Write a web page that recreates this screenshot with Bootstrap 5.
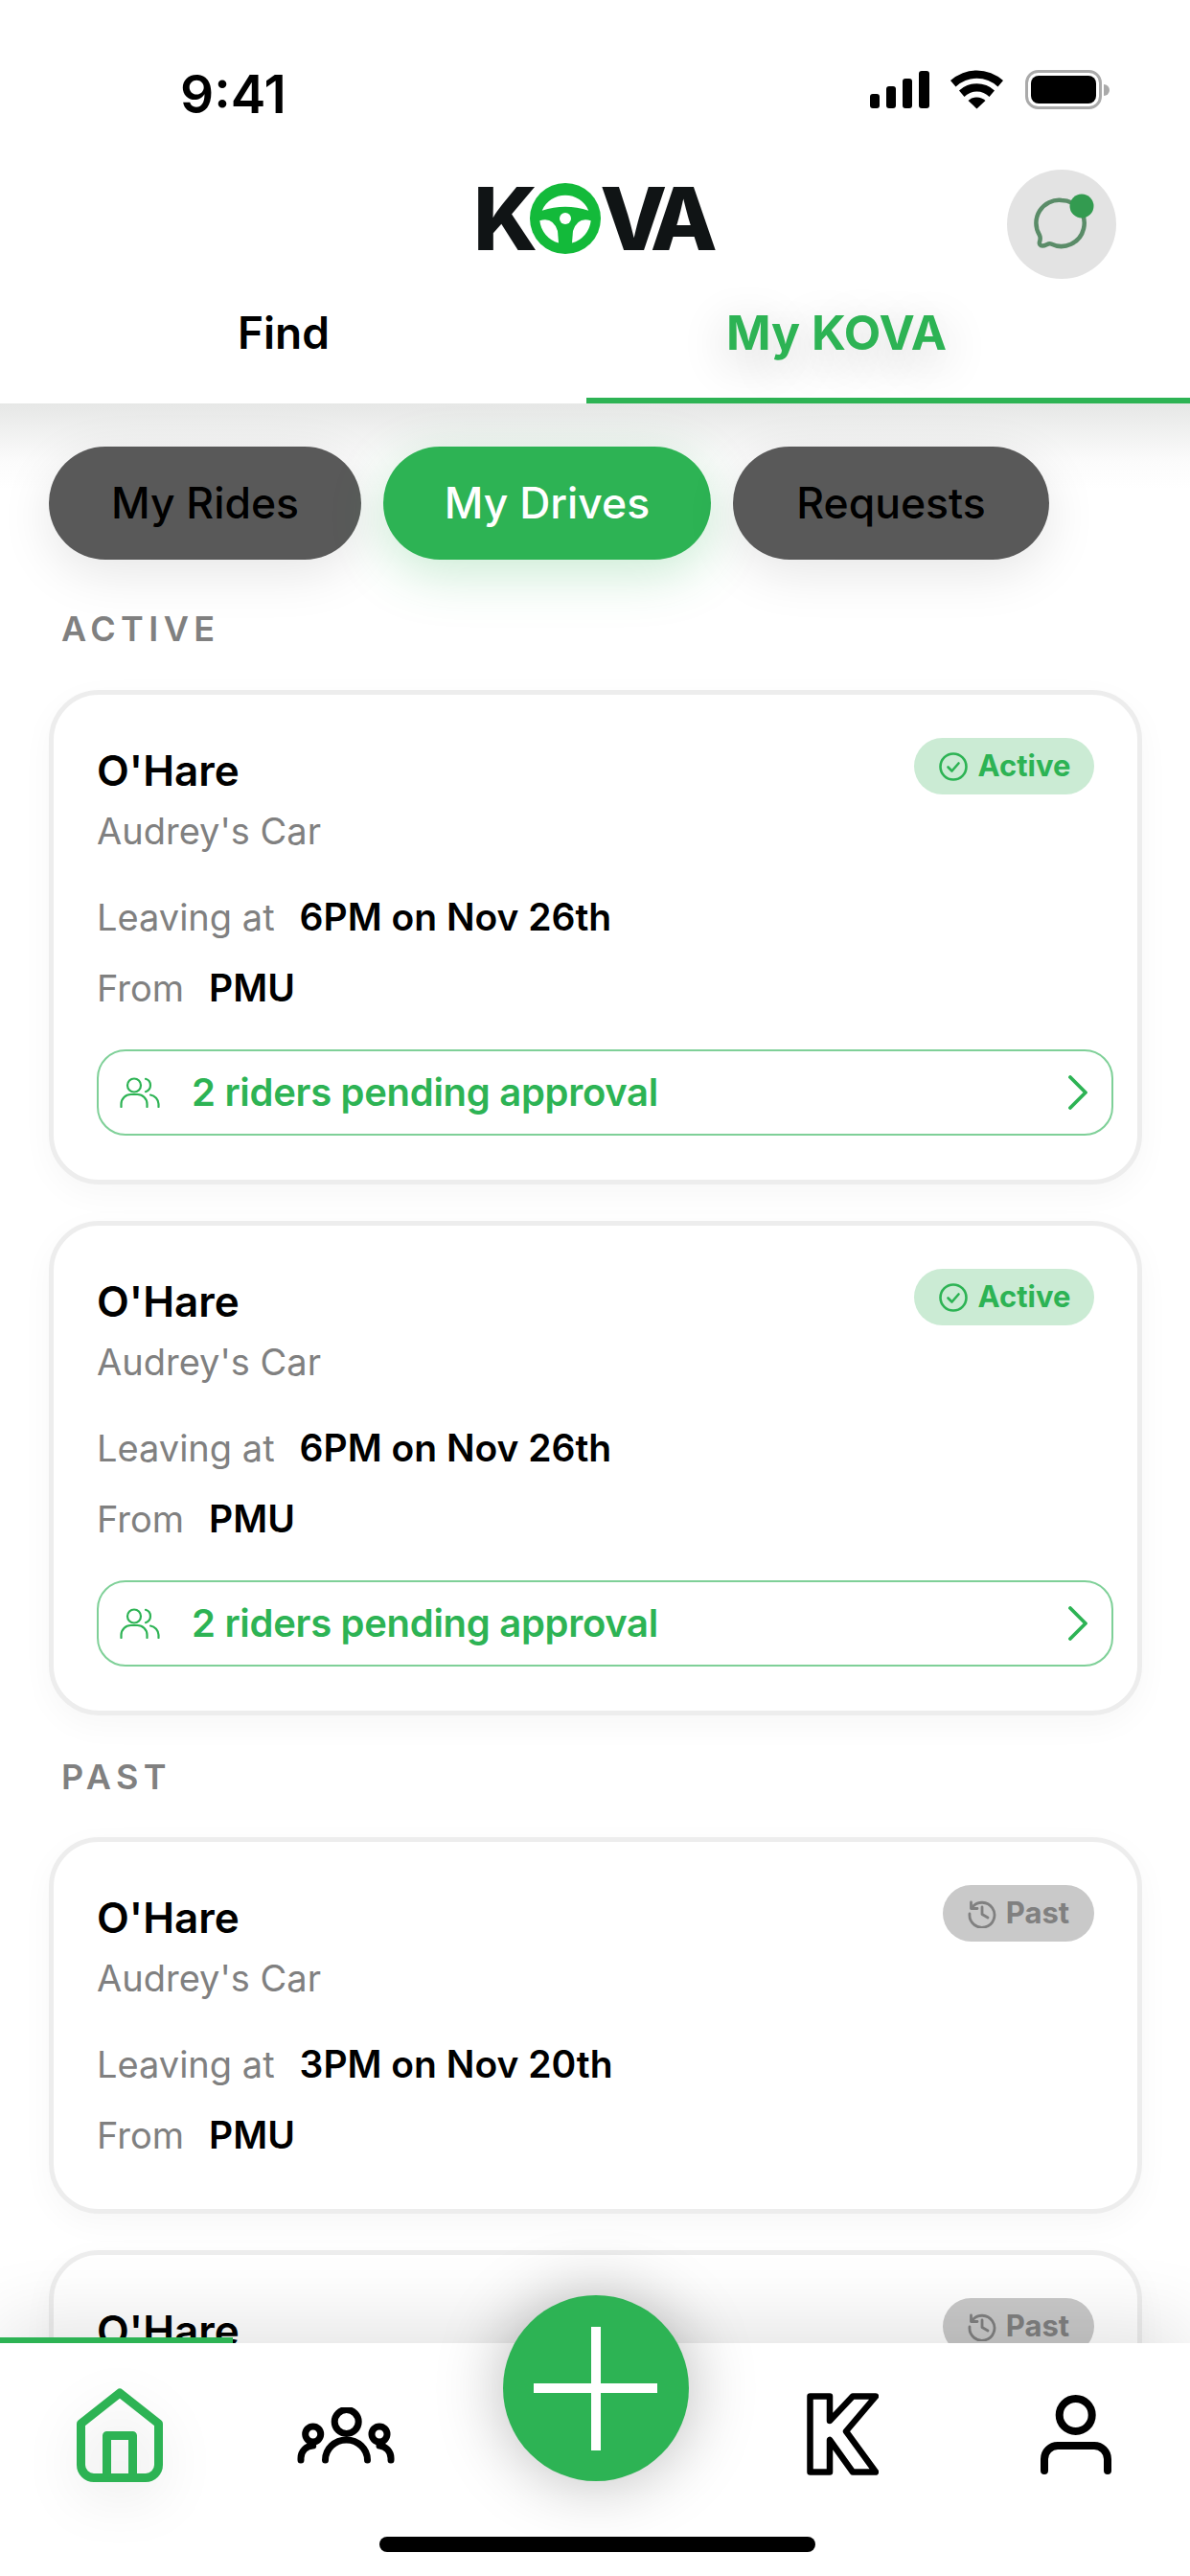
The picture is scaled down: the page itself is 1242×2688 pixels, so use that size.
<!DOCTYPE html>
<html lang="en">
<head>
  <meta charset="UTF-8">
  <meta name="viewport" content="width=device-width, initial-scale=1.0">
  <title>KOVA - My Drives</title>
  <link href="https://cdn.jsdelivr.net/npm/bootstrap@5.3.0/dist/css/bootstrap.min.css" rel="stylesheet">
  <style>
    html, body { height: 100%; }
    body { font-family: Inter, "Liberation Sans", sans-serif; background: #fff; color: #000; }
    .app-screen { width: 1242px; height: 2688px; overflow: hidden; }

    /* header */
    .top-head { height: 421px; background: #fff; flex: none; z-index: 2; }
    .status-row { height: 177px; padding: 73px 84px 0 188px; }
    .status-time { font-size: 55px; font-weight: 600; line-height: 50px; width: 118px; }
    .logo-row { height: 114px; }
    .logo-box { left: 494px; top: -6px; }
    .logo-word { font-size: 91px; font-weight: 800; color: #101415; line-height: 114px; letter-spacing: -5px; }
    .logo-va { letter-spacing: -10px; margin-left: -1px; }
    .logo-wheel { width: 74px; height: 74px; margin: 0 0 0 -3px; }
    .chat-btn { width: 114px; height: 114px; right: 77px; top: 0; background: #e3e3e3; border: 0; padding: 0; }
    .main-tabs { height: 130px; border: 0; }
    .main-tabs .nav-link { border: 0; border-radius: 0; height: 130px; padding: 0 20px 18px 0; font-size: 46px; font-weight: 600; color: #000; background: none; margin: 0; }
    .main-tabs .tab-find { width: 612px; }
    .main-tabs .nav-link.tab-mine { width: 630px; padding: 0 108px 12px 0; color: #2db354; font-size: 50px; font-weight: 700; border-bottom: 6px solid #2db354; text-shadow: 0 12px 50px rgba(0,0,0,.24); }

    /* content */
    .scroll-area { min-height: 0; background: linear-gradient(#e6e7e6, #fbfbfb 60px, #fff 90px); padding: 45px 50px 0 51px; }
    .pill-row { gap: 23px; }
    .pill-btn { height: 118px; border: 0; border-radius: 59px; font-size: 44.5px; font-weight: 500; padding: 0; background: #595959; color: #000; box-shadow: 0 14px 54px rgba(0,0,0,.1); }
    .pill-btn:hover { background: #595959; color: #000; }
    .pill-rides { width: 326px; }
    .pill-drives { width: 342px; background: #2db354; color: #fff; box-shadow: 0 14px 54px rgba(45,179,84,.26); }
    .pill-drives:hover { background: #2db354; color: #fff; }
    .pill-requests { width: 330px; }
    .group-label { font-size: 36px; font-weight: 600; color: #808080; letter-spacing: .15em; line-height: 40px; padding-left: 13px; margin: 52px 0 44px; }
    .group-label.past-label { margin: 44px 0 43px; }
    .drive-card { width: 1141px; border: 5px solid #ededed; border-radius: 52px; padding: 55px 25px 46px 45px; margin-bottom: 38px; box-shadow: 0 10px 34px rgba(0,0,0,.035); }
    .drive-card.past-card { padding-bottom: 55px; }
    .drive-title { font-size: 44px; font-weight: 600; line-height: 48px; }
    .drive-sub { font-size: 38px; line-height: 44px; color: #808080; margin-top: 17px; }
    .drive-line { font-size: 38px; line-height: 44px; color: #808080; margin-top: 30px; }
    .drive-line.first-line { margin-top: 46px; }
    .drive-line b { font-size: 39px; font-weight: 600; color: #000; margin-left: 26px; }
    .state-tag { top: 45px; right: 45px; height: 59px; border-radius: 30px; font-size: 31px; font-weight: 700; gap: 10px; padding: 0; }
    .tag-active { width: 188px; background: #cbebd4; color: #2db354; }
    .tag-past { width: 158px; background: #c9c9c9; color: #808080; }
    .pending-btn { height: 90px; margin-top: 42px; border: 2px solid #7fd098; border-radius: 30px; color: #2db354; font-size: 40px; font-weight: 600; letter-spacing: -.3px; padding: 0 24px 0 22px; background: #fff; gap: 33px; }
    .pending-btn:hover { background: #fff; color: #2db354; border-color: #7fd098; }

    /* bottom bar */
    .bottom-bar { height: 243px; flex: none; background: #fff; z-index: 3; box-shadow: 0 -24px 70px rgba(0,0,0,.1); }
    .bar-mark { left: 0; top: -6px; width: 243px; height: 6px; background: #2db354; }
    .plus-btn { width: 194px; height: 194px; left: 525px; top: -50px; background: #2db354; border: 0; padding: 0; box-shadow: 0 0 70px rgba(0,0,0,.28); }
    .plus-btn:hover { background: #2db354; }
    .icon-home { left: 80px; top: 47px; filter: drop-shadow(0 16px 26px rgba(0,0,0,.12)); }
    .icon-group { left: 310px; top: 67px; }
    .icon-k { left: 842px; top: 52px; }
    .icon-user { left: 1085px; top: 53px; }
    .home-line { left: 396px; top: 202px; width: 455px; height: 16px; border-radius: 8px; background: #000; }
  </style>
</head>
<body>
  <svg width="0" height="0" class="position-absolute">
    <symbol id="i-check" viewBox="0 0 32 32">
      <circle cx="16" cy="16" r="13.5" fill="none" stroke="currentColor" stroke-width="2.6"/>
      <path d="M10.5 16.5l4 4 7-8" fill="none" stroke="currentColor" stroke-width="2.6" stroke-linecap="round" stroke-linejoin="round"/>
    </symbol>
    <symbol id="i-past" viewBox="0 0 30 30">
      <path d="M4.5 8.5A13 13 0 1 1 2 15" fill="none" stroke="currentColor" stroke-width="2.8" stroke-linecap="round"/>
      <path d="M3.5 3v6.5H10" fill="none" stroke="currentColor" stroke-width="2.8" stroke-linecap="round" stroke-linejoin="round"/>
      <path d="M15 8v7.5l6 3.5" fill="none" stroke="currentColor" stroke-width="2.8" stroke-linecap="round" stroke-linejoin="round"/>
    </symbol>
    <symbol id="i-riders" viewBox="0 0 42 32">
      <circle cx="15" cy="8.5" r="7" fill="none" stroke="currentColor" stroke-width="2.2"/>
      <path d="M1.5 31v-3a10 10 0 0 1 10-10h7a10 10 0 0 1 10 10v3" fill="none" stroke="currentColor" stroke-width="2.2" stroke-linecap="round"/>
      <path d="M27 1.8a7 7 0 0 1 0 13.4M32 18.500a10 10 0 0 1 8.500 9.500v3" fill="none" stroke="currentColor" stroke-width="2.2" stroke-linecap="round"/>
    </symbol>
    <symbol id="i-chev" viewBox="0 0 22 36">
      <path d="M3 2l16 16L3 34" fill="none" stroke="currentColor" stroke-width="3.8" stroke-linecap="round" stroke-linejoin="round"/>
    </symbol>
  </svg>

  <div class="app-screen d-flex flex-column position-relative">
    <header class="top-head position-relative">
      <div class="status-row d-flex justify-content-between align-items-start">
        <div class="status-time">9:41</div>
        <svg width="250" height="44" viewBox="0 0 250 44" class="status-icons">
          <rect x="0" y="25" width="10" height="15" rx="3"/>
          <rect x="17" y="17" width="10" height="23" rx="3"/>
          <rect x="34" y="9" width="10" height="31" rx="3"/>
          <rect x="51" y="1" width="11" height="39" rx="3"/>
          <path d="M84 11a41 41 0 0 1 55 0l-5.500 6.500a32 32 0 0 0-44 0z"/>
          <path d="M93 21.500a27 27 0 0 1 37 0l-5.500 6.500a18 18 0 0 0-26 0z"/>
          <path d="M102.500 32a13 13 0 0 1 18 0l-9 8.500z"/>
          <rect x="163.500" y="1.500" width="77" height="38" rx="12" fill="#fff" stroke="#aaa" stroke-width="3"/>
          <rect x="168" y="6" width="68" height="29" rx="8"/>
          <path d="M244 15a6 6 0 0 1 0 12z" fill="#aaa"/>
        </svg>
      </div>
      <div class="logo-row position-relative">
        <div class="logo-box position-absolute d-flex align-items-center logo-word">
          <span>K</span>
          <svg class="logo-wheel" viewBox="0 0 74 74">
            <circle cx="37" cy="37" r="37" fill="#13ba3a"/>
            <path d="M12.700 28.700A26.500 26.500 0 0 1 61.300 28.700Q37 21 12.700 28.700Z" fill="#fff"/>
            <path d="M10.300 39.300Q24 35 29 50L30 62.500A27 27 0 0 1 10.300 39.300Z" fill="#fff"/>
            <path d="M63.700 39.300Q50 35 45 50L44 62.500A27 27 0 0 0 63.700 39.300Z" fill="#fff"/>
            <circle cx="37" cy="37" r="6" fill="#fff"/>
          </svg>
          <span class="logo-va">VA</span>
        </div>
        <button class="chat-btn rounded-circle position-absolute" type="button" aria-label="Messages">
          <svg width="114" height="114" viewBox="0 0 114 114">
            <path d="M57 32a24 24 0 1 1-11 45.500c-3-1.500-5 2-9 2-2.500 0-3.500-2-3-4 .8-2.500 1.200-4.500 0-7A24 24 0 0 1 57 32z" fill="none" stroke="#5a8c68" stroke-width="4.500"/>
            <circle cx="78" cy="38" r="12.500" fill="#339b50"/>
          </svg>
        </button>
      </div>
      <ul class="nav main-tabs">
        <li class="nav-item"><a class="nav-link tab-find d-flex align-items-center justify-content-center" href="#">Find</a></li>
        <li class="nav-item"><a class="nav-link tab-mine active d-flex align-items-center justify-content-center" href="#">My KOVA</a></li>
      </ul>
    </header>

    <main class="scroll-area flex-grow-1 overflow-hidden">
      <div class="pill-row d-flex">
        <button class="btn pill-btn pill-rides" type="button">My Rides</button>
        <button class="btn pill-btn pill-drives" type="button">My Drives</button>
        <button class="btn pill-btn pill-requests" type="button">Requests</button>
      </div>

      <div class="group-label">ACTIVE</div>

      <div class="card drive-card position-relative">
        <span class="state-tag tag-active position-absolute d-flex align-items-center justify-content-center"><svg width="32" height="32"><use href="#i-check"/></svg>Active</span>
        <div class="drive-title">O'Hare</div>
        <div class="drive-sub">Audrey's Car</div>
        <div class="drive-line first-line">Leaving at<b>6PM on Nov 26th</b></div>
        <div class="drive-line">From<b>PMU</b></div>
        <a class="btn pending-btn d-flex align-items-center" href="#">
          <svg width="42" height="32"><use href="#i-riders"/></svg>
          <span class="flex-grow-1 text-start">2 riders pending approval</span>
          <svg width="22" height="36"><use href="#i-chev"/></svg>
        </a>
      </div>

      <div class="card drive-card position-relative">
        <span class="state-tag tag-active position-absolute d-flex align-items-center justify-content-center"><svg width="32" height="32"><use href="#i-check"/></svg>Active</span>
        <div class="drive-title">O'Hare</div>
        <div class="drive-sub">Audrey's Car</div>
        <div class="drive-line first-line">Leaving at<b>6PM on Nov 26th</b></div>
        <div class="drive-line">From<b>PMU</b></div>
        <a class="btn pending-btn d-flex align-items-center" href="#">
          <svg width="42" height="32"><use href="#i-riders"/></svg>
          <span class="flex-grow-1 text-start">2 riders pending approval</span>
          <svg width="22" height="36"><use href="#i-chev"/></svg>
        </a>
      </div>

      <div class="group-label past-label">PAST</div>

      <div class="card drive-card past-card position-relative">
        <span class="state-tag tag-past position-absolute d-flex align-items-center justify-content-center"><svg width="30" height="30"><use href="#i-past"/></svg>Past</span>
        <div class="drive-title">O'Hare</div>
        <div class="drive-sub">Audrey's Car</div>
        <div class="drive-line first-line">Leaving at<b>3PM on Nov 20th</b></div>
        <div class="drive-line">From<b>PMU</b></div>
      </div>

      <div class="card drive-card past-card position-relative">
        <span class="state-tag tag-past position-absolute d-flex align-items-center justify-content-center"><svg width="30" height="30"><use href="#i-past"/></svg>Past</span>
        <div class="drive-title">O'Hare</div>
        <div class="drive-sub">Audrey's Car</div>
      </div>
    </main>

    <nav class="bottom-bar position-relative">
      <div class="bar-mark position-absolute"></div>
      <svg class="position-absolute icon-home" width="90" height="98" viewBox="0 0 90 98" fill="none" stroke="#2db354" stroke-width="9" stroke-linejoin="round">
        <path d="M45 5L85.500 37V80A13.500 13.500 0 0 1 72 93.500H18A13.500 13.500 0 0 1 4.500 80V37Z"/>
        <path d="M31.500 93.500V49.500H58.500V93.500"/>
      </svg>
      <svg class="position-absolute icon-group" width="102" height="60" viewBox="0 0 102 60" fill="none" stroke="#000" stroke-width="7" stroke-linecap="round">
        <circle cx="51.700" cy="15" r="12.500"/>
        <path d="M29.500 55A22 21 0 0 1 73.500 55"/>
        <circle cx="16.700" cy="28" r="8"/>
        <path d="M4 55V53A13 13 0 0 1 16.700 40"/>
        <circle cx="86" cy="28" r="8"/>
        <path d="M98 55V53A13 13 0 0 0 86 40"/>
      </svg>
      <button class="plus-btn rounded-circle position-absolute" type="button" aria-label="Add">
        <svg width="194" height="194" viewBox="0 0 194 194"><path d="M92 33h10v59h59v10h-59v60H92v-60H32V92h60z" fill="#fff"/></svg>
      </button>
      <svg class="position-absolute icon-k" width="75" height="86" viewBox="0 0 75 86" fill="none" stroke="#000" stroke-width="6.500" stroke-linejoin="round">
        <path d="M3.500 3.500H24V29L48 3.500H72L41 40L72 82.500H48L24 49V82.500H3.500Z"/>
      </svg>
      <svg class="position-absolute icon-user" width="76" height="84" viewBox="0 0 76 84" fill="none" stroke="#000" stroke-width="8" stroke-linecap="round">
        <circle cx="37.700" cy="22" r="17"/>
        <path d="M5 80V68A14 14 0 0 1 19 54H57A14 14 0 0 1 71 68V80"/>
      </svg>
      <div class="home-line position-absolute"></div>
    </nav>
  </div>

  <script src="https://cdn.jsdelivr.net/npm/bootstrap@5.3.0/dist/js/bootstrap.bundle.min.js"></script>
</body>
</html>
